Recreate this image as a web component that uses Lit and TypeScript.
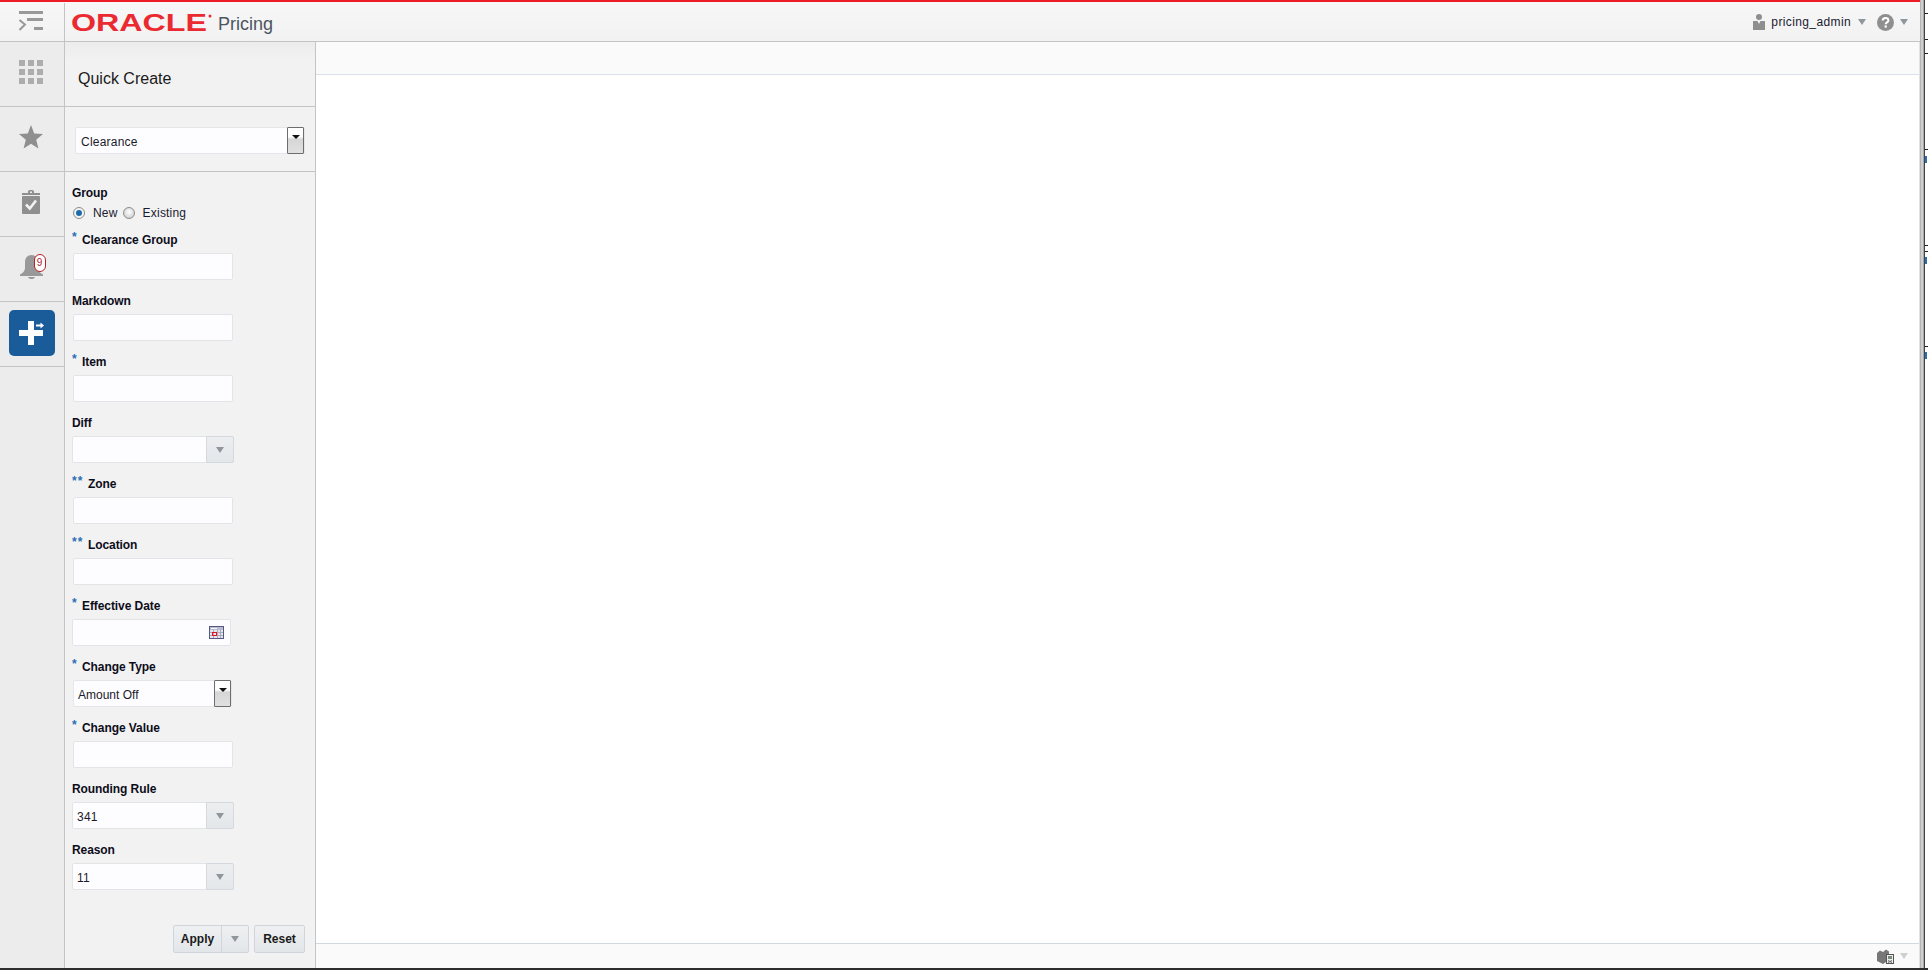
import { LitElement, html, css, svg, nothing } from "lit";
import { customElement } from "lit/decorators.js";

type Field = { label: string; req?: number; kind: "input" | "combo" | "date" | "select"; value?: string };

const FIELDS: Field[] = [
  { label: "Clearance Group", req: 1, kind: "input" },
  { label: "Markdown", kind: "input" },
  { label: "Item", req: 1, kind: "input" },
  { label: "Diff", kind: "combo" },
  { label: "Zone", req: 2, kind: "input" },
  { label: "Location", req: 2, kind: "input" },
  { label: "Effective Date", req: 1, kind: "date" },
  { label: "Change Type", req: 1, kind: "select", value: "Amount Off" },
  { label: "Change Value", req: 1, kind: "input" },
  { label: "Rounding Rule", kind: "combo", value: "341" },
  { label: "Reason", kind: "combo", value: "11" },
];

const TICKS = [13, 39, 53, 149, 245, 251, 346];
const BLUE_MARKS = [156, 257, 352];

@customElement("app-root")
export class AppRoot extends LitElement {
  static styles = css`
    :host { display: block; width: 1928px; height: 970px; overflow: hidden; font-family: "Liberation Sans", Arial, sans-serif; font-size: 12px; color: #111; background: #fff; }
    * { box-sizing: border-box; }
    .page { display: flex; flex-direction: column; height: 970px; }
    .top { display: flex; flex: 1; min-height: 0; }
    .window { flex: 0 0 1920px; display: flex; flex-direction: column; min-width: 0; }
    .bottom-line { height: 2px; background: #2e2e2e; flex: none; }
    .edge { position: relative; flex: 1; display: flex; }
    .edge-bar { width: 4px; background: #cfcfcf; border-left: 1px solid #b5b5b5; border-right: 1px solid #a8a8a8; }
    .edge-line { width: 1px; background: #444; }
    .tick { position: absolute; left: 5px; width: 3px; height: 1px; background: #222; }
    .mark { position: absolute; left: 5px; width: 2px; height: 7px; background: #2a6fb5; }

    .header { flex: none; height: 42px; display: flex; align-items: stretch; border-top: 2px solid #ee1c25; border-bottom: 1px solid #c4c4c4; background: linear-gradient(#f7f7f7, #f2f2f2); }
    .menu { width: 65px; flex: none; display: flex; align-items: center; justify-content: center; padding: 0 2px 2px 0; margin-top: 1px; border-right: 1px solid #c4c4c4; }
    .logo { margin-left: 6px; flex: none; display: block; }
    .logo text { font-family: "Liberation Sans", Arial, sans-serif; }
    .app-name { margin-left: 5px; font-size: 18px; color: #4c5560; line-height: 39px; padding-top: 3px; }
    .spacer { flex: 1; }
    .user { display: flex; align-items: center; padding: 1px 12px 0 0; }
    .user-name { margin: 0 7px 0 6px; color: #1a1a30; font-size: 12px; letter-spacing: 0.38px; }
    .tri { width: 0; height: 0; border-left: 4.5px solid transparent; border-right: 4.5px solid transparent; border-top: 6px solid #8f969c; flex: none; }
    .help { margin: 0 6px 0 11px; display: block; }

    .body { flex: 1; display: flex; min-height: 0; }
    .rail { width: 65px; flex: none; background: #ececec; border-right: 1px solid #c4c4c4; }
    .rail-item { height: 65px; border-bottom: 1px solid #c4c4c4; display: flex; align-items: center; justify-content: center; padding: 0 2px 4px 0; position: relative; }
    .rail-item.add { padding: 0 1px 2px 0; }
    .bell { position: relative; display: flex; }
    .badge { position: absolute; left: 14px; top: -1px; width: 12px; height: 18px; border-radius: 6px; background: #fff; border: 1px solid #b5202c; color: #b5202c; font-size: 10px; line-height: 16px; text-align: center; }
    .add-btn { width: 46px; height: 46px; border-radius: 5px; background: #1a5c9a; display: flex; align-items: center; justify-content: center; }

    .panel { width: 251px; flex: none; background: #f2f2f2; border-right: 1px solid #c4c4c4; display: flex; flex-direction: column; }
    .panel-title { height: 65px; flex: none; border-bottom: 1px solid #c4c4c4; font-size: 16px; color: #1a1a1a; padding: 9px 0 0 13px; display: flex; align-items: center; background: linear-gradient(#ececec, #f2f2f2 30%); }
    .panel-select { height: 65px; flex: none; border-bottom: 1px solid #c4c4c4; padding: 20px 0 0 10px; }
    .select { display: flex; align-items: center; height: 27px; background: #fdfdff; border: 1px solid #e4e7ea; border-radius: 2px; color: #1a1a2a; padding: 2px 0 0 5px; position: relative; letter-spacing: 0.22px; }
    .select.wide { width: 230px; }
    .select.narrow { width: 159px; margin-left: 1px; padding-left: 4px; letter-spacing: 0; }
    .select-btn { position: absolute; right: 0; top: -1px; bottom: -1px; width: 17px; border: 1px solid #6d6d6d; border-radius: 1px; background: linear-gradient(#fff 0 35%, #d6d6d6 45%, #e0e0e0); display: flex; justify-content: center; padding-top: 7px; }
    .select-btn i { width: 0; height: 0; border-left: 4px solid transparent; border-right: 4px solid transparent; border-top: 4px solid #111; }

    .form { padding: 12px 0 0 7px; flex: 1; display: flex; flex-direction: column; }
    .lbl { display: block; height: 16px; line-height: 16px; padding-top: 1px; font-weight: 700; color: #0d0d1a; white-space: nowrap; letter-spacing: -0.08px; }
    .radios { display: flex; align-items: center; height: 15px; margin-top: 5px; color: #1a1a30; letter-spacing: 0.2px; }
    .radio { width: 12px; height: 12px; border-radius: 50%; border: 1px solid #8c8c8c; background: radial-gradient(circle at 50% 40%, #fff, #c4c4c4); display: flex; align-items: center; justify-content: center; margin-left: 1px; }
    .radio.on { background: #f4f4f4; }
    .radio.on i { width: 6px; height: 6px; border-radius: 50%; background: #1b6ca8; }
    .radios span { margin: 0 4px 0 8px; }
    .row { padding-top: 11px; }
    .req { display: inline-block; color: #2a6fb5; font-weight: 700; width: 10px; line-height: 10px; vertical-align: 3px; }
    .req.two { width: 16px; letter-spacing: 1px; }
    .ctl { margin-top: 6px; height: 27px; margin-bottom: 1px; background: #fdfdff; border: 1px solid #e2e5e8; border-radius: 2px; }
    .ctl.bare { background: none; border: none; }
    .ctl.input { width: 160px; margin-left: 1px; }
    .ctl.combo { width: 162px; display: flex; align-items: center; padding: 2px 0 0 4px; position: relative; color: #1a1a2a; letter-spacing: 0.25px; }
    .ctl.date { width: 159px; position: relative; display: flex; align-items: center; justify-content: flex-end; padding-right: 6px; }
    .combo-btn { position: absolute; right: -1px; top: -1px; bottom: -1px; width: 28px; border: 1px solid #d3d9de; border-radius: 0 2px 2px 0; background: linear-gradient(#eceef0, #e4e7ea); display: flex; align-items: center; justify-content: center; }
    .actions { display: flex; justify-content: flex-end; padding-right: 10px; margin-top: 34px; gap: 5px; }
    .btn { height: 28px; display: flex; align-items: stretch; border: 1px solid #cfd5da; border-radius: 2px; background: linear-gradient(#eef0f2, #e3e6e9); font-weight: 700; color: #1a1a1a; }
    .btn span { display: flex; align-items: center; justify-content: center; }
    .btn .apply { width: 48px; border-right: 1px solid #cfd5da; }
    .btn .more { width: 26px; }
    .btn .reset { width: 49px; }

    .main { flex: 1; display: flex; flex-direction: column; border-right: 1px solid #dfe3e6; min-width: 0; }
    .main-top { height: 33px; flex: none; background: #fafafa; border-bottom: 1px solid #d9e2ea; }
    .main-content { flex: 1; background: #fff; }
    .main-foot { height: 25px; flex: none; background: #fafafa; border-top: 1px solid #cfd9e0; display: flex; align-items: center; justify-content: flex-end; padding: 0 11px 0 0; gap: 6px; }
    .main-foot .tri { border-top-color: #cfcfcf; }
  `;

  private field(f: Field) {
    const mark = f.req
      ? html`<span class="req ${f.req === 2 ? "two" : ""}">${"*".repeat(f.req)}</span>`
      : nothing;
    const arrow = html`<span class="tri"></span>`;
    let ctl;
    if (f.kind === "input") ctl = html`<div class="ctl input"></div>`;
    else if (f.kind === "combo")
      ctl = html`<div class="ctl combo">${f.value ?? ""}<div class="combo-btn">${arrow}</div></div>`;
    else if (f.kind === "date")
      ctl = html`<div class="ctl date">${this.calendar()}</div>`;
    else
      ctl = html`<div class="ctl bare"><div class="select narrow">${f.value}<div class="select-btn"><i></i></div></div></div>`;
    return html`<div class="row"><label class="lbl">${mark}${f.label}</label>${ctl}</div>`;
  }

  private calendar() {
    return html`<svg width="15" height="13" viewBox="0 0 15 13">
      <rect x="0.5" y="0.5" width="14" height="12" fill="#e6e6ee" stroke="#55597f"/>
      <rect x="1" y="1" width="13" height="3" fill="#b9bcd0"/>
      <rect x="2" y="2" width="6" height="1" fill="#f4f4f8"/>
      <path d="M1 6.5H14M1 9.5H14M4.5 4V12M8.5 4V12M11.5 4V12" stroke="#a9abbf" stroke-width="1" fill="none"/>
      <rect x="3.5" y="6.5" width="4" height="3" fill="none" stroke="#e8141c"/>
    </svg>`;
  }

  render() {
    return html`
      <div class="page">
        <div class="top">
          <div class="window">
            <header class="header">
              <div class="menu">
                <svg width="24" height="20" viewBox="0 0 24 20" fill="#999">
                  <rect x="0" y="0" width="24" height="3"/>
                  <rect x="8" y="7" width="16" height="3"/>
                  <rect x="15" y="16" width="9" height="3"/>
                  <path d="M0.5 9L6 13.5L0.5 19" fill="none" stroke="#999" stroke-width="2"/>
                </svg>
              </div>
              <svg class="logo" width="142" height="39" viewBox="0 0 142 39">
                <text x="0" y="29" font-size="24.5" font-weight="700" fill="#ea2a30" textLength="136" lengthAdjust="spacingAndGlyphs">ORACLE</text>
                <circle cx="139" cy="14" r="1.5" fill="#ea2a30"/>
              </svg>
              <div class="app-name">Pricing</div>
              <div class="spacer"></div>
              <div class="user">
                <svg width="12" height="16" viewBox="0 0 12 16" fill="#8f8f8f">
                  <circle cx="6" cy="3" r="3"/>
                  <path d="M0 7H4.5L6 10L7.5 7H12V16H0Z"/>
                </svg>
                <span class="user-name">pricing_admin</span>
                <span class="tri"></span>
                <svg class="help" width="17" height="17" viewBox="0 0 17 17">
                  <circle cx="8.5" cy="8.5" r="8.5" fill="#8f8f8f"/>
                  <path d="M5.7 6.5C5.7 4.8 7 4 8.5 4C10.2 4 11.4 5 11.4 6.4C11.4 8.4 8.7 8.4 8.7 10.2" fill="none" stroke="#fff" stroke-width="2"/>
                  <rect x="7.6" y="11.4" width="2.2" height="2.2" fill="#fff"/>
                </svg>
                <span class="tri"></span>
              </div>
            </header>
            <div class="body">
              <nav class="rail">
                <div class="rail-item">
                  <svg width="24" height="24" viewBox="0 0 24 24" fill="#adadad">
                    ${[0, 9, 18].flatMap((y) => [0, 9, 18].map((x) => svg`<rect x=${x} y=${y} width="6" height="6"/>`))}
                  </svg>
                </div>
                <div class="rail-item">
                  <svg width="24" height="24" viewBox="0 0 24 24" fill="#8f8f8f">
                    <path d="M12 0L15.2 8.4L24 9L17.2 14.7L19.4 23.5L12 18.7L4.6 23.5L6.8 14.7L0 9L8.8 8.4Z"/>
                  </svg>
                </div>
                <div class="rail-item">
                  <svg width="18" height="24" viewBox="0 0 18 24" fill="#8f8f8f">
                    <path d="M6 3V1.5C6 .5 7 0 9 0S12 .5 12 1.5V3H18V5H0V3ZM8 1.5V3H10V1.5Z"/>
                    <rect x="0" y="6" width="18" height="18" rx="1"/>
                    <path d="M4 14.5L7.8 18.5L14 10.5" fill="none" stroke="#f2f2f2" stroke-width="2.6"/>
                  </svg>
                </div>
                <div class="rail-item">
                  <div class="bell">
                    <svg width="23" height="24" viewBox="0 0 23 24" fill="#999">
                      <path d="M11.5 0C15.5 0 18 3 18 7V13C18 16 20 18 23 19.5V21H0V19.5C3 18 5 16 5 13V7C5 3 7.5 0 11.5 0Z"/>
                      <path d="M8 22H15C14.5 23.4 13 24 11.5 24S8.5 23.4 8 22Z"/>
                    </svg>
                    <span class="badge">9</span>
                  </div>
                </div>
                <div class="rail-item add">
                  <div class="add-btn">
                    <svg width="25" height="24" viewBox="0 0 25 24" fill="#fff">
                      <path d="M9 0H15V9H24V15H15V24H9V15H0V9H9Z"/>
                      <path d="M17 3.6H21.5V1.5L25 4.5L21.5 7.5V5.4H17Z"/>
                    </svg>
                  </div>
                </div>
              </nav>
              <aside class="panel">
                <div class="panel-title">Quick Create</div>
                <div class="panel-select">
                  <div class="select wide">Clearance<div class="select-btn"><i></i></div></div>
                </div>
                <div class="form">
                  <label class="lbl">Group</label>
                  <div class="radios">
                    <div class="radio on"><i></i></div><span>New</span>
                    <div class="radio"></div><span>Existing</span>
                  </div>
                  ${FIELDS.map((f) => this.field(f))}
                  <div class="actions">
                    <div class="btn"><span class="apply">Apply</span><span class="more"><span class="tri"></span></span></div>
                    <div class="btn"><span class="reset">Reset</span></div>
                  </div>
                </div>
              </aside>
              <main class="main">
                <div class="main-top"></div>
                <div class="main-content"></div>
                <div class="main-foot">
                  <svg width="17" height="15" viewBox="0 0 17 15" fill="#777">
                    <path d="M0 4L3 1.5L6 3L9 .5L12 2.5V5H9V13L6 15L0 12Z"/>
                    <rect x="9.5" y="5.5" width="7" height="9" fill="#eef0f0" stroke="#555"/>
                    <rect x="11" y="7" width="4" height="3" fill="#7a8a7a"/>
                    <path d="M11 11.5L15 13.5M15 11.5L11 13.5" stroke="#666" fill="none"/>
                  </svg>
                  <span class="tri"></span>
                </div>
              </main>
            </div>
          </div>
          <div class="edge">
            <div class="edge-bar"></div>
            <div class="edge-line"></div>
            ${TICKS.map((y) => html`<span class="tick" style="top:${y}px"></span>`)}
            ${BLUE_MARKS.map((y) => html`<span class="mark" style="top:${y}px"></span>`)}
          </div>
        </div>
        <div class="bottom-line"></div>
      </div>
    `;
  }
}
